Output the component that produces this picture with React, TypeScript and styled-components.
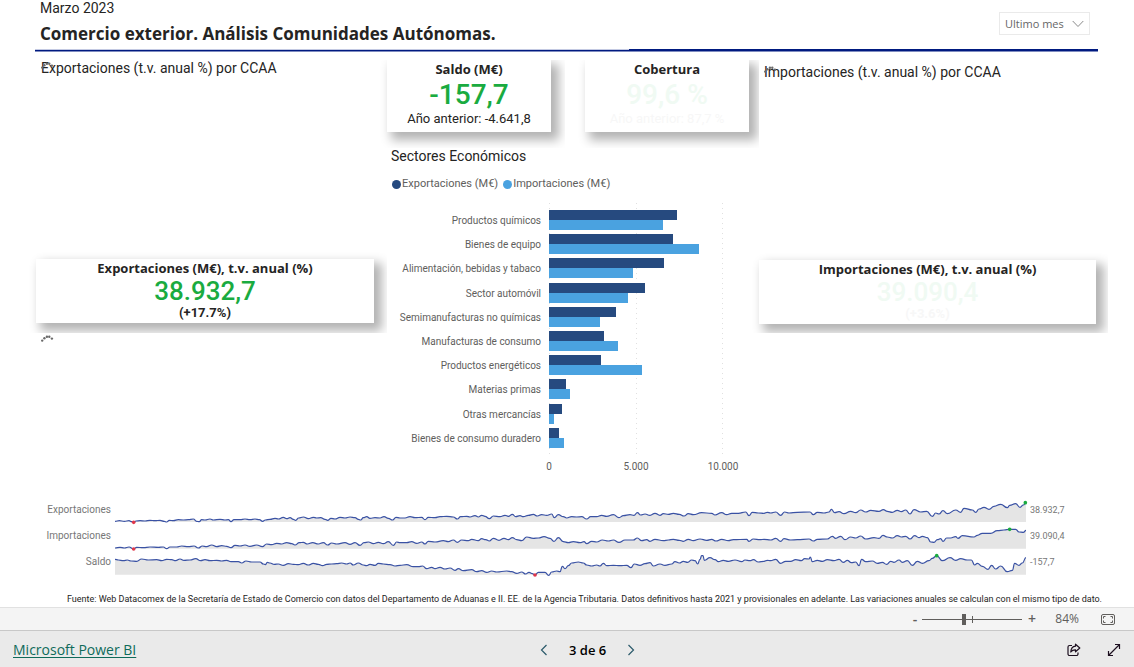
import React from "react";
import styled, { createGlobalStyle } from "styled-components";

const din = `Roboto, "Liberation Sans", sans-serif`;
const segoe = `"Open Sans", "Noto Sans", sans-serif`;

const GlobalStyle = createGlobalStyle`
  *, *::before, *::after { box-sizing: border-box; }
  body { margin: 0; background: #fff; color: #252423; font-family: ${din}; }
  h1, h2, h3, p { margin: 0; font-weight: 400; }
  button { border: 0; padding: 0; background: none; color: inherit; font: inherit; cursor: pointer; }
`;

const Page = styled.div`
  min-height: 100vh;
  display: flex;
  flex-direction: column;
`;

const Report = styled.main`
  flex: 1;
  display: flex;
  flex-direction: column;
`;

/* ---------- Header ---------- */

const Header = styled.header`
  display: flex;
  justify-content: space-between;
  align-items: flex-start;
  height: 49px;
  padding: 0 44px 0 40px;
`;

const Period = styled.p`
  font-size: 14px;
  line-height: 17px;
`;

const Title = styled.h1`
  font: 700 17px/34px ${segoe};
`;

const SelectBox = styled.div`
  position: relative;
  margin-top: 12px;
  color: #666;
`;

const Select = styled.select`
  appearance: none;
  width: 91px;
  height: 23px;
  padding: 0 24px 0 5px;
  border: 1px solid #eaeaea;
  border-radius: 0;
  background: #fff;
  color: inherit;
  font: 11px ${segoe};
`;

const SelectArrow = styled.svg`
  position: absolute;
  right: 6px;
  top: 8px;
  pointer-events: none;
`;

const Rule = styled.div`
  display: flex;
  height: 3px;
  margin: 0 36px 0 35px;
`;

const RulePart = styled.span<{ $grow: number; $top: string }>`
  flex: ${(p) => p.$grow};
  background: linear-gradient(${(p) => p.$top} 1px, #001a80 1px 2px, #7f8cc0 2px);
`;

/* ---------- Body ---------- */

const Columns = styled.div`
  display: grid;
  grid-template-columns: 338fr 385fr 337fr;
  padding: 8px 38px 0 36px;
`;

const Side = styled.section`
  display: flex;
  flex-direction: column;
`;

const Middle = styled.section`
  padding: 0 10px 0 13px;
`;

const MapTitle = styled.h2<{ $drop?: boolean }>`
  position: relative;
  height: ${(p) => (p.$drop ? 200 : 199)}px;
  padding: ${(p) => (p.$drop ? 4 : 0)}px 0 0 5px;
  font-size: 14px;
  line-height: 17px;
`;

const OverlayDots = styled.span<{ $drop?: boolean }>`
  position: absolute;
  left: 5px;
  top: ${(p) => (p.$drop ? 6 : 2)}px;
  line-height: 0;
`;

const PendingMap = styled.div`
  padding: 12px 5px 0;
  line-height: 0;
`;

const Card = styled.article<{ $tall?: boolean; $clip: string }>`
  height: ${(p) => (p.$tall ? 72 : 64)}px;
  background: #fff;
  text-align: center;
  box-shadow: 6px 6px 10px 2px rgba(0, 0, 0, 0.3);
  clip-path: inset(${(p) => p.$clip});
`;

const CardTitle = styled.h3`
  font: 700 13px/18px ${segoe};
`;

const Figure = styled.p<{ $size: number; $line: number; $faded?: boolean }>`
  font-size: ${(p) => p.$size}px;
  line-height: ${(p) => p.$line}px;
  font-weight: 500;
  color: ${(p) => (p.$faded ? "#f0faf3" : "#1aab40")};
`;

const Detail = styled.p<{ $bold?: boolean; $faded?: boolean }>`
  font: ${(p) => (p.$bold ? 700 : 400)} 13px/14px ${din};
  color: ${(p) => (p.$faded ? "#f7f7f7" : "#252423")};
`;

const CardPair = styled.div`
  display: flex;
  justify-content: space-between;
  gap: 34px;

  & > * { flex: 1; }
`;

/* ---------- Bar chart ---------- */

const ChartTitle = styled.h2`
  margin-top: 15px;
  padding-left: 4px;
  font-size: 14px;
  line-height: 18px;
`;

const Legend = styled.div`
  display: flex;
  gap: 5px;
  margin-top: 10px;
  padding-left: 5px;
  color: #605e5c;
  font: 11px/18px ${din};
`;

const LegendItem = styled.span<{ $color: string }>`
  display: flex;
  align-items: center;
  gap: 1px;

  &::before {
    content: "";
    width: 9px;
    height: 9px;
    border-radius: 50%;
    background: ${(p) => p.$color};
  }
`;

const Chart = styled.div`
  display: grid;
  grid-template-columns: 154px 1fr;
  column-gap: 8px;
  margin: 10px 26px 0 0;
  color: #605e5c;
  font: 10px/24px ${din};
`;

const Labels = styled.div`
  display: flex;
  flex-direction: column;
  height: 252px;
  padding: 6px 0 4px;
  text-align: right;
  white-space: nowrap;

  & > * { flex: 1; }
`;

const Plot = styled.div`
  display: flex;
  flex-direction: column;
  height: 252px;
  padding: 5px 0;
  --dots: repeating-linear-gradient(#e0e0e0 0 1px, transparent 1px 5px);
  background:
    var(--dots) 0 0 / 1px 100% no-repeat,
    var(--dots) 50% 0 / 1px 100% no-repeat,
    var(--dots) 100% 0 / 1px 100% no-repeat;
`;

const BarPair = styled.div`
  flex: 1;
  padding-top: 2px;
`;

const Bar = styled.div<{ $color: string }>`
  height: 10px;
  background: ${(p) => p.$color};
`;

const Axis = styled.div`
  grid-column: 2;
  display: flex;
  justify-content: space-between;
  margin: 4px -30px 0;
  line-height: 16px;

  & > span { width: 60px; text-align: center; }
`;

/* ---------- Sparklines ---------- */

const Trends = styled.section`
  display: grid;
  grid-template-columns: 75px 1fr 67px;
  column-gap: 4px;
  row-gap: 2px;
  margin: 24px 37px 0 36px;
  color: #777;
  font: 10px/22px ${din};
`;

const TrendName = styled.span`
  text-align: right;
`;

const TrendValue = styled.span`
  font-size: 9px;
`;

const TrendPlot = styled.svg`
  display: block;
  width: 100%;
  height: 24px;
`;

const Source = styled.p`
  margin-top: 18px;
  padding: 0 32px 1px 0;
  text-align: right;
  white-space: nowrap;
  font-size: 9px;
  line-height: 13px;
`;

/* ---------- Bottom bars ---------- */

const ZoomBar = styled.div`
  display: flex;
  align-items: center;
  justify-content: flex-end;
  height: 23px;
  padding-right: 19px;
  border-top: 1px solid #e1e1e1;
  background: #f4f4f4;
  color: #605e5c;
  font: 12px/20px ${segoe};
`;

const StepButton = styled.button`
  width: 10px;
  font-size: 14px;
  font-weight: 600;
  line-height: 20px;
`;

const Slider = styled.input`
  appearance: none;
  width: 100px;
  height: 14px;
  margin: 0 5px 0 2px;
  background:
    linear-gradient(#605e5c, #605e5c) 50px 50% / 1px 7px no-repeat,
    linear-gradient(#605e5c, #605e5c) 0 50% / 100% 1px no-repeat;

  &::-webkit-slider-thumb {
    appearance: none;
    width: 4px;
    height: 11px;
    background: #605e5c;
  }
`;

const Percent = styled.span`
  width: 42px;
  text-align: right;
`;

const FitButton = styled.button`
  margin-left: 22px;
  line-height: 0;
`;

const Footer = styled.footer`
  display: flex;
  align-items: center;
  justify-content: space-between;
  height: 37px;
  padding: 2px 13px 0;
  border-top: 1px solid #c8c8c8;
  background: #eaeaea;
  color: #000;
  font: 14px/20px ${segoe};
`;

const BrandLink = styled.a`
  color: #0f6a5a;
  text-underline-offset: 2px;
`;

const Pager = styled.nav`
  display: flex;
  align-items: center;
  gap: 21px;
  font-size: 13px;
  font-weight: 600;

  & > button { line-height: 0; }
`;

const Actions = styled.div`
  display: flex;
  gap: 26px;
  padding-left: 28px;

  & > button { line-height: 0; }
`;

/* ---------- Data ---------- */

const NAVY = "#264a7f";
const SKY = "#4aa2e0";
const AXIS_MAX = 10000;

const sectors = [
  { name: "Productos químicos", exp: 7380, imp: 6550 },
  { name: "Bienes de equipo", exp: 7110, imp: 8620 },
  { name: "Alimentación, bebidas y tabaco", exp: 6610, imp: 4850 },
  { name: "Sector automóvil", exp: 5500, imp: 4530 },
  { name: "Semimanufacturas no químicas", exp: 3840, imp: 2940 },
  { name: "Manufacturas de consumo", exp: 3170, imp: 3970 },
  { name: "Productos energéticos", exp: 3000, imp: 5330 },
  { name: "Materias primas", exp: 1000, imp: 1190 },
  { name: "Otras mercancías", exp: 750, imp: 270 },
  { name: "Bienes de consumo duradero", exp: 590, imp: 850 },
];

type Mark = { x: number; y: number; color: string };
type Trend = { name: string; value: string; top: number; base: number; runs: [number, string][]; marks: Mark[] };

const RED = "#e0374a";
const GREEN = "#1aab40";

// Each run is an x offset followed by its "x,y" samples.
const trends: Trend[] = [
  {
    name: "Exportaciones", value: "38.932,7", top: 27, base: 96,
    runs: [
      [-255, "255,94 268,92 283,94 297,92 305,95 311,97 318,93 330,92 345,93 360,91 375,92 390,91 403,94 410,96 418,91 430,92 445,89 460,90 475,89 490,87 500,94 508,95 515,89 525,90 540,87 550,90 570,88 585,90 595,89 603,95 612,89 630,89 645,87 660,89 675,87 688,89 698,94 706,90 720,88 735,85 745,87 760,82 770,86 780,83 790,88 797,91 806,84 820,81 835,86 850,82 860,84 872,83 885,88 893,91 903,85 915,87 930,82 945,84 960,81 975,83 985,88 992,90 1000,83 1010,80 1020,85 1035,83 1050,84 1062,80 1075,85 1088,90 1098,82"],
      [855, "0,84 15,84 30,80 45,83 65,82 75,89 85,82 105,83 120,80 140,79 160,81 172,87 182,80 200,79 210,81 225,77 235,81 245,76 255,79 268,86 280,78 300,80 315,76 325,79 337,73 347,80 360,77 370,80 385,76 400,73 412,78 425,74 440,76 455,72 463,83 475,74 490,80 500,84 515,80 530,81 545,80 560,87 572,80 590,80 605,76 620,79 640,74 657,83 670,77 690,74 702,76 712,68 722,75 735,72 750,76 765,70 780,76 790,71 805,73 820,70 838,73 852,78 865,71 880,74 905,68 935,70 945,75 965,68 980,74 995,70 1015,70 1037,66 1047,77 1057,67 1075,69"],
      [1947, "0,70 10,67 20,69 35,66 50,76 62,66 75,69 100,67 138,66 148,74 160,67 180,69 195,66 202,58 212,68 225,65 240,71 260,64 275,68 290,60 305,66 320,61 345,64 358,59 370,64 385,67 400,61 412,65 425,60 438,72 450,59 470,66 488,64 505,79 515,69 525,72 537,62 550,71 575,60 590,67 600,55 625,60 635,67 645,57 660,52 675,58 690,49 710,43 730,53 737,46 755,41 768,52 778,45 786,38"],
    ],
    marks: [{ x: 56, y: 97, color: RED }, { x: 2731, y: 38, color: GREEN }],
  },
  {
    name: "Importaciones", value: "39.090,4", top: 105, base: 176,
    runs: [
      [-255, "255,174 270,172 283,174 297,171 311,177 320,172 340,173 360,171 385,172 400,171 410,176 420,171 440,171 455,168 475,170 492,168 505,174 517,168 530,170 545,165 560,170 575,167 590,169 603,173 615,166 630,168 645,165 660,169 680,165 697,170 710,162 725,164 740,160 755,162 770,158 785,161 795,165 808,158 820,157 832,162 848,158 865,162 880,158 893,165 905,159 920,162 945,158 960,163 975,158 990,166 1002,158 1015,156 1030,161 1045,157 1060,161 1075,155 1090,166 1100,156"],
      [855, "0,158 20,158 35,155 50,160 65,156 75,162 85,154 105,156 130,152 145,155 160,150 172,157 185,150 205,152 215,148 235,152 245,146 257,149 268,153 280,145 297,151 312,145 325,149 337,143 350,149 365,152 380,141 400,145 415,144 432,140 450,145 462,154 475,143 490,155 505,158 520,155 540,158 552,155 560,161 575,154 590,156 607,150 625,153 640,150 657,157 675,150 700,150 712,144 725,152 740,149 750,154 765,148 790,152 805,150 820,148 838,151 850,154 865,148 880,152 900,147 920,151 935,148 948,153 965,148 985,152 1000,149 1040,148 1047,154 1060,147 1080,149"],
      [1947, "0,148 20,150 35,145 50,154 60,146 80,150 100,149 135,147 148,153 160,148 190,147 205,139 215,145 230,139 243,149 260,141 275,144 290,138 305,147 330,143 345,145 357,136 370,141 385,144 400,137 412,141 425,139 438,147 452,137 465,143 475,139 490,143 500,156 510,157 520,149 530,146 537,154 548,144 560,144 575,140 582,145 595,137 630,141 640,136 655,130 680,130 700,122 720,120 737,118 755,118 765,126 778,127 786,121"],
    ],
    marks: [{ x: 56, y: 177, color: RED }, { x: 2684, y: 118, color: GREEN }],
  },
  {
    name: "Saldo", value: "-157,7", top: 183, base: 254,
    runs: [
      [-255, "255,208 265,210 280,212 292,210 303,213 320,214 335,207 355,210 380,209 395,212 410,208 425,209 437,212 450,207 462,211 480,210 497,206 512,212 525,209 540,212 560,211 575,213 590,211 603,215 625,215 635,219 648,213 665,216 690,216 700,222 706,224 712,217 720,219 733,223 745,222 760,226 775,221 790,223 805,224 820,220 835,225 850,220 865,223 878,227 890,223 905,222 920,221 935,219 950,222 960,219 970,225 985,219 1000,225 1010,227 1020,223 1035,226 1045,220 1060,222 1080,224 1095,228"],
      [855, "0,226 20,224 40,230 55,230 68,228 80,236 95,232 105,236 120,232 135,237 150,234 165,241 175,236 190,242 215,239 230,245 245,242 260,247 275,243 290,246 320,243 335,245 350,250 365,246 377,252 387,247 397,251 405,255 415,247 435,247 446,256 455,246 470,243 480,245 487,229 495,236 505,227 515,219 535,216 550,219 560,225 575,228 590,225 600,228 610,220 620,227 640,226 660,227 680,226 693,233 703,222 720,226 735,221 750,218 760,228 780,222 795,226 815,222 825,215 838,219 850,214 863,217 875,210 885,212 893,222 900,208 905,197 909,197 913,211 930,203 945,209 955,215 970,211 985,214 1005,210 1025,215 1035,210 1050,212 1060,209 1075,216"],
      [1947, "0,214 10,211 20,212 35,208 50,220 65,214 80,214 95,209 112,212 122,206 135,207 139,201 145,215 160,211 175,214 190,209 210,212 225,208 238,217 250,211 262,218 275,216 285,227 293,208 305,215 325,213 340,220 355,217 368,223 380,214 390,217 405,210 415,217 430,212 445,226 460,214 475,220 495,212 505,205 518,197 535,212 558,203 575,211 590,206 610,210 622,210 632,225 640,220 655,229 672,238 683,226 695,237 710,228 730,245 745,241 752,220 765,226 775,219 786,203"],
    ],
    marks: [{ x: 1260, y: 255, color: RED }, { x: 2465, y: 197, color: GREEN }],
  },
];

function curve(trend: Trend): string {
  const points = trend.runs.flatMap(([offset, run]) =>
    run.split(" ").map((pair) => {
      const [x, y] = pair.split(",").map(Number);
      return [x + offset, y];
    }),
  );
  return points
    .map(([x, y], i) => {
      if (i === 0) return `M${x} ${y}`;
      const [px, py] = points[i - 1];
      const mid = (px + x) / 2;
      return `C${mid} ${py} ${mid} ${y} ${x} ${y}`;
    })
    .join("");
}

/* ---------- Pieces ---------- */

const Dots = () => (
  <svg width="13" height="7" viewBox="0 0 13 7" fill="#6a6a6a" aria-hidden="true">
    <circle cx="1.2" cy="5.6" r="1.2" />
    <circle cx="3.4" cy="3.2" r="1.2" />
    <circle cx="5.9" cy="1.8" r="1.2" />
    <circle cx="8.3" cy="1.8" r="1.2" />
    <circle cx="10.9" cy="3.6" r="1.2" />
  </svg>
);

const Chevron = ({ d }: { d: string }) => (
  <svg width="8" height="12" viewBox="0 0 8 12" fill="none" stroke="#2b5a6b" strokeWidth="1.2" aria-hidden="true">
    <path d={d} />
  </svg>
);

const TrendRow = ({ trend }: { trend: Trend }) => {
  const line = curve(trend);
  return (
    <>
      <TrendName>{trend.name}</TrendName>
      <TrendPlot viewBox={`0 ${trend.top} 2733 72`} preserveAspectRatio="none" overflow="visible" role="img" aria-label={trend.name}>
        <path d={`${line}L2733 ${trend.base}L0 ${trend.base}Z`} fill="#e5e5e5" />
        <path d={line} fill="none" stroke="#3a52a4" strokeWidth="3.6" strokeLinejoin="round" />
        {trend.marks.map((m) => (
          <circle key={m.x} cx={m.x} cy={m.y} r="5.5" fill={m.color} />
        ))}
      </TrendPlot>
      <TrendValue>{trend.value}</TrendValue>
    </>
  );
};

export default function App() {
  return (
    <Page>
      <GlobalStyle />
      <Report>
        <Header>
          <div>
            <Period>Marzo 2023</Period>
            <Title>Comercio exterior. Análisis Comunidades Autónomas.</Title>
          </div>
          <SelectBox>
            <Select aria-label="Periodo" defaultValue="mes">
              <option value="mes">Ultimo mes</option>
            </Select>
            <SelectArrow width="12" height="8" viewBox="0 0 12 8" fill="none" stroke="#8a8a8a" aria-hidden="true">
              <path d="M0.7 1L6 6.5L11.3 1" />
            </SelectArrow>
          </SelectBox>
        </Header>
        <Rule>
          <RulePart $grow={594} $top="#c3c9e2" />
          <RulePart $grow={469} $top="#001a80" />
        </Rule>

        <Columns>
          <Side>
            <MapTitle>
              Exportaciones (t.v. anual %) por CCAA
              <OverlayDots><Dots /></OverlayDots>
            </MapTitle>
            <Card $clip="-14px -13px -10px -14px">
              <CardTitle>Exportaciones (M€), t.v. anual (%)</CardTitle>
              <Figure $size={26} $line={29}>38.932,7</Figure>
              <Detail $bold>(+17.7%)</Detail>
            </Card>
            <PendingMap><Dots /></PendingMap>
          </Side>

          <Middle>
            <CardPair>
              <Card $tall $clip="0 -14px -16px -14px">
                <CardTitle>Saldo (M€)</CardTitle>
                <Figure $size={28} $line={34}>-157,7</Figure>
                <Detail>Año anterior: -4.641,8</Detail>
              </Card>
              <Card $tall $clip="0 -10px -16px -14px">
                <CardTitle>Cobertura</CardTitle>
                <Figure $size={28} $line={34} $faded>99,6 %</Figure>
                <Detail $faded>Año anterior: 87,7 %</Detail>
              </Card>
            </CardPair>

            <ChartTitle>Sectores Económicos</ChartTitle>
            <Legend>
              <LegendItem $color={NAVY}>Exportaciones (M€)</LegendItem>
              <LegendItem $color={SKY}>Importaciones (M€)</LegendItem>
            </Legend>
            <Chart>
              <Labels>
                {sectors.map((s) => <span key={s.name}>{s.name}</span>)}
              </Labels>
              <Plot>
                {sectors.map((s) => (
                  <BarPair key={s.name}>
                    <Bar $color={NAVY} style={{ width: `${(s.exp / AXIS_MAX) * 100}%` }} />
                    <Bar $color={SKY} style={{ width: `${(s.imp / AXIS_MAX) * 100}%` }} />
                  </BarPair>
                ))}
              </Plot>
              <Axis>
                <span>0</span>
                <span>5.000</span>
                <span>10.000</span>
              </Axis>
            </Chart>
          </Middle>

          <Side>
            <MapTitle $drop>
              Importaciones (t.v. anual %) por CCAA
              <OverlayDots $drop><Dots /></OverlayDots>
            </MapTitle>
            <Card $clip="-14px -12px -9px -14px">
              <CardTitle>Importaciones (M€), t.v. anual (%)</CardTitle>
              <Figure $size={26} $line={29} $faded>39.090,4</Figure>
              <Detail $bold $faded>(+3.6%)</Detail>
            </Card>
          </Side>
        </Columns>

        <Trends>
          {trends.map((t) => <TrendRow key={t.name} trend={t} />)}
        </Trends>
        <Source>
          Fuente: Web Datacomex de la Secretaría de Estado de Comercio con datos del Departamento de Aduanas e II. EE. de la Agencia Tributaria. Datos definitivos hasta 2021 y provisionales en adelante. Las variaciones anuales se calculan con el mismo tipo de dato.
        </Source>
      </Report>

      <ZoomBar>
        <StepButton aria-label="Alejar">-</StepButton>
        <Slider type="range" min="0" max="200" defaultValue="84" aria-label="Zoom" />
        <StepButton aria-label="Acercar">+</StepButton>
        <Percent>84%</Percent>
        <FitButton aria-label="Ajustar a la página">
          <svg width="14" height="11" viewBox="0 0 14 11" fill="none" stroke="#605e5c" aria-hidden="true">
            <rect x="0.5" y="0.5" width="13" height="10" rx="1.5" />
            <path d="M2.5 4.5v-2h2M9.5 2.5h2v2M11.5 6.5v2h-2M4.5 8.5h-2v-2" />
          </svg>
        </FitButton>
      </ZoomBar>

      <Footer>
        <BrandLink href="#powerbi">Microsoft Power BI</BrandLink>
        <Pager aria-label="Páginas">
          <button aria-label="Página anterior"><Chevron d="M6.5 1L1.5 6L6.5 11" /></button>
          <span>3 de 6</span>
          <button aria-label="Página siguiente"><Chevron d="M1.5 1L6.5 6L1.5 11" /></button>
        </Pager>
        <Actions>
          <button aria-label="Compartir">
            <svg width="14" height="14" viewBox="0 0 14 14" fill="none" stroke="#1d1020" strokeWidth="1.2" strokeLinejoin="round" aria-hidden="true">
              <path d="M5 2.5H2.5A1.5 1.5 0 0 0 1 4v7a1.5 1.5 0 0 0 1.5 1.5h7a1.5 1.5 0 0 0 1.5-1.5V9.5" />
              <path d="M8.5 1.2L12.8 5L8.5 8.8V6.8C6.2 6.7 4.8 7.5 3.8 9C4 5.8 5.6 3.5 8.5 3.2Z" />
            </svg>
          </button>
          <button aria-label="Pantalla completa">
            <svg width="14" height="14" viewBox="0 0 14 14" fill="none" stroke="#1d1020" strokeWidth="1.2" aria-hidden="true">
              <path d="M1.5 12.5L12.5 1.5M8 1.5h4.5V6M6 12.5H1.5V8" />
            </svg>
          </button>
        </Actions>
      </Footer>
    </Page>
  );
}
